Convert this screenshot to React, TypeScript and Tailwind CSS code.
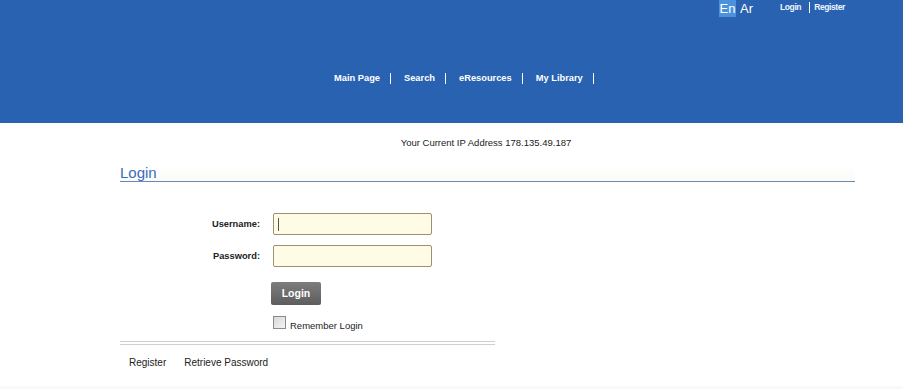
import React from 'react'

const navItems = ['Main Page', 'Search', 'eResources', 'My Library']

export default function App() {
  return (
    <div className="w-[903px] h-[389px] bg-white font-['Liberation_Sans',Arial,sans-serif] text-[#222] overflow-hidden flex flex-col">
      {/* header */}
      <div className="h-[123px] bg-[#2962b0] flex flex-col">
        <div className="flex items-start pl-[719px] h-[17px]">
          <span className="bg-[#4b91dc] text-white text-[13px] leading-[17px] w-[17px] text-center">En</span>
          <span className="text-white text-[13px] leading-[17px] ml-[4px]">Ar</span>
          <span className="text-[#eef4ff] text-[8.5px] font-bold leading-[14px] ml-[27px] tracking-[-0.4px]">Login</span>
          <span className="ml-[8px] mt-[2px] h-[11px] border-l border-white" />
          <span className="text-[#eef4ff] text-[8.5px] font-bold leading-[14px] ml-[4px] tracking-[-0.4px]">Register</span>
        </div>
        <nav className="flex items-center pl-[334px] mt-[55px] h-[12px]">
          {navItems.map((item) => (
            <div key={item} className="flex items-center">
              <span className="text-white text-[9.3px] font-bold leading-[12px]">{item}</span>
              <span className="ml-[10px] mr-[13px] h-[11px] border-l border-white" />
            </div>
          ))}
        </nav>
      </div>

      {/* content */}
      <div className="ml-[120px] w-[735px] flex flex-col">
        <p className="mt-[14px] text-[9.5px] leading-[12px] text-center pr-[3px]">
          Your Current IP Address 178.135.49.187
        </p>
        <h2 className="mt-[16px] text-[15px] leading-[16px] text-[#3a6cbf] border-b border-[#6a87bb] bg-gradient-to-b from-white to-[#fbfbf6]">
          Login
        </h2>

        {/* form */}
        <div className="mt-[31px] flex flex-col gap-[10px]">
          <div className="flex items-center">
            <label className="w-[140px] text-right text-[9.3px] font-bold leading-[12px]">Username:</label>
            <div className="ml-[13px] w-[159px] h-[22px] bg-[#fffbe5] border border-[#9c9170] rounded-[2px] flex items-center pl-[4px]">
              <span className="h-[13px] border-l border-[#555]" />
            </div>
          </div>
          <div className="flex items-center">
            <label className="w-[140px] text-right text-[9.3px] font-bold leading-[12px]">Password:</label>
            <div className="ml-[13px] w-[159px] h-[22px] bg-[#fffbe5] border border-[#9c9170] rounded-[2px]" />
          </div>
        </div>

        <button className="mt-[15px] ml-[151px] w-[50px] h-[23px] rounded-[2px] bg-gradient-to-b from-[#7d7d7d] to-[#5d5d5d] text-white text-[10.5px] font-bold leading-[23px]">
          Login
        </button>

        <div className="mt-[11px] ml-[153px] flex items-start">
          <span className="w-[13px] h-[13px] border border-[#8a8a8a] bg-gradient-to-br from-[#d8d8d8] to-[#f4f4f4]" />
          <span className="ml-[4px] mt-[4px] text-[9.5px] leading-[12px]">Remember Login</span>
        </div>

        <div className="mt-[9px] w-[375px] h-[4px] border-t border-b border-[#cfcfcf]" />

        <div className="mt-[12px] flex text-[10px] leading-[12px] pl-[9px]">
          <span>Register</span>
          <span className="ml-[18px]">Retrieve Password</span>
        </div>
      </div>

      <div className="flex-1" />
      <div className="h-[3px] bg-[#f9f9f9]" />
    </div>
  )
}
